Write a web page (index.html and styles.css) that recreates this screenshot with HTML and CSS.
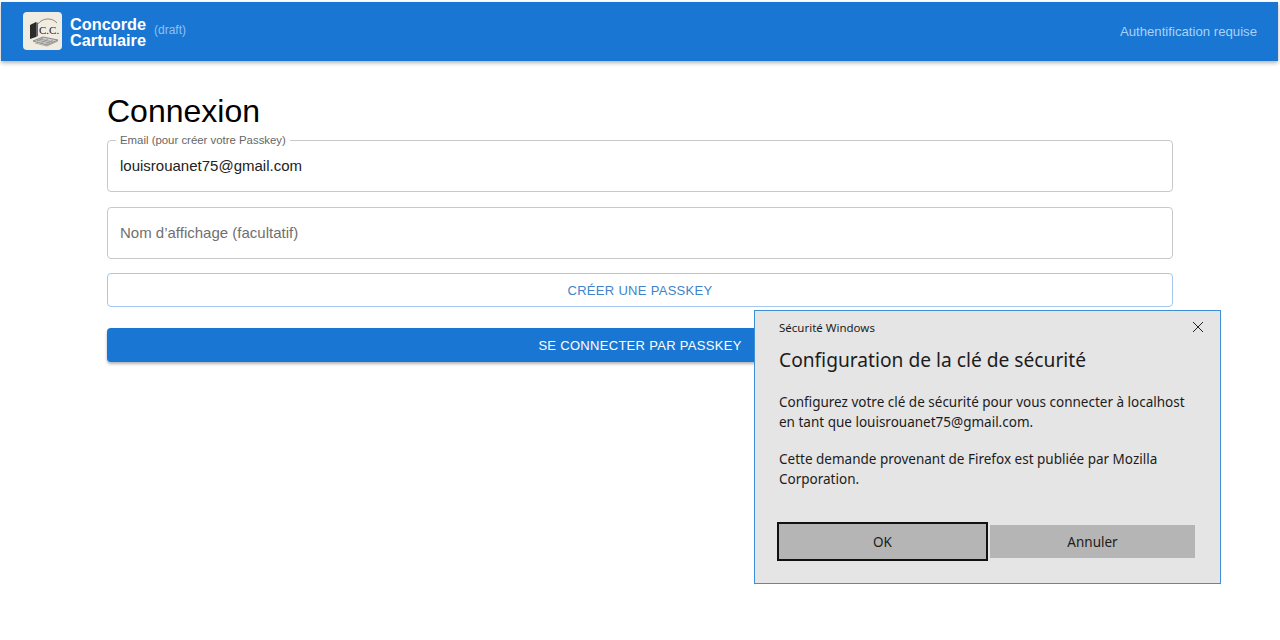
FILE: index.html
```html
<!DOCTYPE html>
<html lang="fr">
<head>
<meta charset="utf-8">
<title>Concorde Cartulaire</title>
<link rel="stylesheet" href="styles.css">
</head>
<body>
<header class="appbar">
  <div class="brand">
    <div class="logo">
      <svg viewBox="0 0 39 38" width="39" height="38">
        <path d="M7 13l6-3v15l-6 2z" fill="#2b2b2b"/>
        <path d="M13 10l2 1v13l-2 1z" fill="#666"/>
        <path d="M15 12c4-6 14-7 19-1" fill="none" stroke="#8a8a8a" stroke-width="1"/>
        <text x="16" y="22" class="logo-text">C.C.</text>
        <path d="M10 29l10-4 15 3-11 5z" fill="#cfcfc8" stroke="#777" stroke-width=".8"/>
        <path d="M12 31l12 3 11-5M14 28l13 3M17 27l13 3M20 26l-6 3M25 27l-7 4M30 28l-7 4" fill="none" stroke="#8c8c8c" stroke-width=".7"/>
      </svg>
    </div>
    <div class="brand-name">Concorde<br>Cartulaire</div>
    <span class="draft">(draft)</span>
  </div>
  <span class="auth">Authentification requise</span>
</header>
<main class="page">
  <h1 class="title">Connexion</h1>
  <fieldset class="field field-filled">
    <legend class="field-label">Email (pour créer votre Passkey)</legend>
    <span class="field-value">louisrouanet75@gmail.com</span>
  </fieldset>
  <div class="field field-empty">Nom d’affichage (facultatif)</div>
  <button class="btn btn-outline">CRÉER UNE PASSKEY</button>
  <button class="btn btn-solid">SE CONNECTER PAR PASSKEY</button>
</main>
<section class="dialog">
  <div class="dialog-top">
    <span class="dialog-app">Sécurité Windows</span>
    <svg class="dialog-close" viewBox="0 0 12 12" width="12" height="12"><path d="M1 1l10 10M11 1L1 11" stroke="#222" stroke-width="1" fill="none"/></svg>
  </div>
  <h2 class="dialog-title">Configuration de la clé de sécurité</h2>
  <p class="dialog-text">Configurez votre clé de sécurité pour vous connecter à localhost<br>en tant que louisrouanet75@gmail.com.</p>
  <p class="dialog-text">Cette demande provenant de Firefox est publiée par Mozilla<br>Corporation.</p>
  <div class="dialog-actions">
    <button class="dlg-btn dlg-ok">OK</button>
    <button class="dlg-btn">Annuler</button>
  </div>
</section>
</body>
</html>
```
FILE: styles.css
```css
* { box-sizing: border-box; }
html, body { margin: 0; height: 640px; overflow: hidden; background: #fff; }
body { font-family: "Liberation Sans", Arial, sans-serif; color: #111; position: relative; }

.appbar {
  margin: 2px 2px 0 1px;
  height: 59px;
  background: #1976d2;
  box-shadow: 0 2px 4px rgba(0,0,0,.3);
  display: flex;
  align-items: center;
  justify-content: space-between;
  padding: 0 21px 0 22px;
}
.brand { display: flex; align-items: center; }
.logo {
  width: 39px; height: 38px;
  margin-top: -1px;
  background: #f1ece1;
  border-radius: 4px;
  overflow: hidden;
}
.logo svg { display: block; }
.logo-text { font-family: "Liberation Serif", serif; font-size: 11px; fill: #222; }
.brand-name {
  margin-left: 8px;
  color: #fff;
  font-weight: 700;
  font-size: 16.3px;
  line-height: 16px;
}
.draft { margin-left: 8px; font-size: 12px; color: #90c0f2; margin-bottom: 3px; }
.auth { font-size: 13.2px; color: #a9d2f9; }

.page { padding: 32px 107px 0; }
.title { margin: 0 0 11px; font-weight: 400; font-size: 32px; line-height: 36px; color: #000; }
.field {
  display: block;
  margin: 0 0 15px;
  width: 100%;
  border: 1px solid #c9c9c9;
  border-radius: 4px;
  height: 52px;
  padding: 0 12px;
  font-size: 15px;
}
.field-filled { margin-top: -6px; height: 58px; min-width: 0; }
.field-label { font-size: 11.4px; color: #666; padding: 0 4px; margin-left: -4px; line-height: 13px; }
.field-value { display: block; margin-top: 9px; line-height: 20px; color: #222; }
.field-empty { display: flex; align-items: center; color: #707070; margin-bottom: 14px; padding-bottom: 2px; }

.btn {
  display: block;
  width: 100%;
  height: 34px;
  border-radius: 4px;
  font-family: inherit;
  font-size: 13px;
  letter-spacing: .3px;
  padding: 0;
}
.btn-outline { background: #fff; color: #3f83cc; border: 1px solid #a5c8ea; margin-bottom: 21px; }
.btn-solid { background: #1976d2; color: #fff; border: 0; box-shadow: 0 2px 3px rgba(0,0,0,.3); }

.dialog {
  position: absolute;
  left: 754px; top: 310px;
  width: 467px; height: 274px;
  background: #e5e5e5;
  border: 1px solid #3f8fd6;
  padding: 0 24px;
  font-family: "Noto Sans", "Open Sans", sans-serif;
  color: #1c1c1c;
}
.dialog-top { display: flex; justify-content: space-between; align-items: center; height: 30px; padding-top: 2px; }
.dialog-app { font-size: 11.5px; }
.dialog-close { margin-right: -8px; }
.dialog-title { margin: 6px 0 20px; font-weight: 400; font-size: 19.2px; line-height: 26px; }
.dialog-text { margin: 0 0 18px; font-size: 13.5px; line-height: 19.5px; }
.dialog-actions { display: flex; gap: 2px; margin: 33px 0 0 -2px; align-items: center; }
.dlg-btn {
  width: 205px; height: 33px;
  background: #b5b5b5;
  border: 0;
  font-family: inherit;
  font-size: 13.5px;
  color: #1c1c1c;
  padding: 0;
}
.dlg-ok { width: 211px; height: 39px; border: 2px solid #111; }
```
